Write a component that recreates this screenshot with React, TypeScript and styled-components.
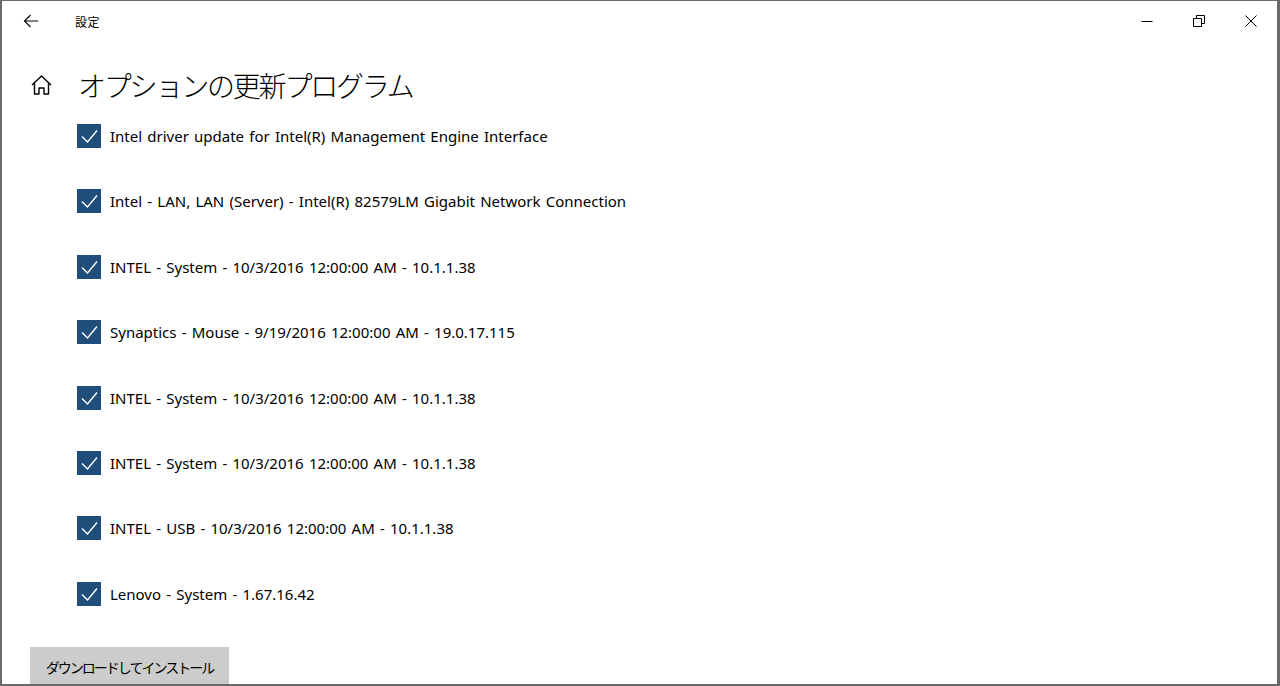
import React from "react";
import styled, { createGlobalStyle } from "styled-components";

const GlobalStyle = createGlobalStyle`
  html, body {
    margin: 0;
    padding: 0;
    background: #ffffff;
  }
`;

const Window = styled.div`
  width: 1280px;
  height: 686px;
  box-sizing: border-box;
  border-style: solid;
  border-color: #6a6a6a;
  border-width: 1px 3px 2px 2px;
  background: #ffffff;
  overflow: hidden;
  display: flex;
  flex-direction: column;
  font-family: "Noto Sans", "Noto Sans CJK JP", sans-serif;
  color: #000;
`;

const TitleBar = styled.div`
  height: 40px;
  flex-shrink: 0;
  display: flex;
  align-items: center;
`;

const BackButton = styled.div`
  width: 52px;
  display: flex;
  justify-content: center;
  padding-left: 6px;
  box-sizing: border-box;
`;

const AppName = styled.div`
  margin-left: 21px;
  font-family: "Noto Sans CJK JP", sans-serif;
  font-size: 12px;
  letter-spacing: 0.5px;
`;

const Controls = styled.div`
  margin-left: auto;
  display: flex;
  height: 100%;
`;

const ControlButton = styled.div`
  width: 52px;
  display: flex;
  align-items: center;
  justify-content: center;
`;

const Header = styled.div`
  margin-top: 22px;
  height: 44px;
  display: flex;
  align-items: center;
`;

const HomeIcon = styled.div`
  width: 47px;
  padding-left: 29px;
  box-sizing: content-box;
  display: flex;
  align-items: center;
`;

const Title = styled.h1`
  margin: 0;
  font-family: "Noto Sans CJK JP", sans-serif;
  font-weight: 300;
  font-size: 28px;
  letter-spacing: -2.2px;
  line-height: 44px;
`;

const List = styled.div`
  padding: 17px 0 0 75px;
  display: flex;
  flex-direction: column;
  gap: 41.4px;
`;

const Row = styled.label`
  height: 24px;
  display: flex;
  align-items: center;
  gap: 9px;
  font-size: 15px;
  word-spacing: 1.3px;
`;

const Box = styled.span`
  width: 24px;
  height: 24px;
  flex-shrink: 0;
  background: #1f4e7a;
  display: flex;
  align-items: center;
  justify-content: center;
`;

const Footer = styled.div`
  padding: 41px 0 0 28px;
`;

const Button = styled.div`
  width: 199px;
  height: 40px;
  background: #cccccc;
  display: flex;
  align-items: center;
  justify-content: center;
  font-family: "Noto Sans CJK JP", sans-serif;
  font-size: 14px;
  letter-spacing: -2px;
`;

const items = [
  "Intel driver update for Intel(R) Management Engine Interface",
  "Intel - LAN, LAN (Server) - Intel(R) 82579LM Gigabit Network Connection",
  "INTEL - System - 10/3/2016 12:00:00 AM - 10.1.1.38",
  "Synaptics - Mouse - 9/19/2016 12:00:00 AM - 19.0.17.115",
  "INTEL - System - 10/3/2016 12:00:00 AM - 10.1.1.38",
  "INTEL - System - 10/3/2016 12:00:00 AM - 10.1.1.38",
  "INTEL - USB - 10/3/2016 12:00:00 AM - 10.1.1.38",
  "Lenovo - System - 1.67.16.42",
];

const Check = () => (
  <svg width="24" height="24" viewBox="0 0 24 24">
    <path d="M5 12.5 L10.5 18 L20 6.5" fill="none" stroke="#fff" strokeWidth="1.4" />
  </svg>
);

const App = () => {
  return (
    <>
      <GlobalStyle />
      <Window>
        <TitleBar>
          <BackButton>
            <svg width="16" height="14" viewBox="0 0 16 14">
              <path d="M15 7 H1.5 M7.5 1 L1.5 7 L7.5 13" fill="none" stroke="#000" strokeWidth="1.1" />
            </svg>
          </BackButton>
          <AppName>設定</AppName>
          <Controls>
            <ControlButton>
              <svg width="12" height="12" viewBox="0 0 12 12">
                <path d="M0.5 6.5 H11.5" stroke="#000" strokeWidth="1" />
              </svg>
            </ControlButton>
            <ControlButton>
              <svg width="12" height="12" viewBox="0 0 12 12">
                <path d="M0.5 3.5 H8.5 V11.5 H0.5 Z M3.5 3.5 V0.5 H11.5 V8.5 H8.5" fill="none" stroke="#000" strokeWidth="1" />
              </svg>
            </ControlButton>
            <ControlButton>
              <svg width="12" height="12" viewBox="0 0 12 12">
                <path d="M0.5 0.5 L11.5 11.5 M11.5 0.5 L0.5 11.5" stroke="#000" strokeWidth="1" />
              </svg>
            </ControlButton>
          </Controls>
        </TitleBar>
        <Header>
          <HomeIcon>
            <svg width="21" height="20" viewBox="0 0 21 20">
              <path
                d="M1 10 L10.5 1 L20 10 M3.5 7.8 V19 H8 V13 H13 V19 H17.5 V7.8"
                fill="none"
                stroke="#000"
                strokeWidth="1.4"
                strokeLinejoin="round"
              />
            </svg>
          </HomeIcon>
          <Title>オプションの更新プログラム</Title>
        </Header>
        <List>
          {items.map((text, i) => (
            <Row key={i}>
              <Box>
                <Check />
              </Box>
              {text}
            </Row>
          ))}
        </List>
        <Footer>
          <Button>ダウンロードしてインストール</Button>
        </Footer>
      </Window>
    </>
  );
};

export default App;
